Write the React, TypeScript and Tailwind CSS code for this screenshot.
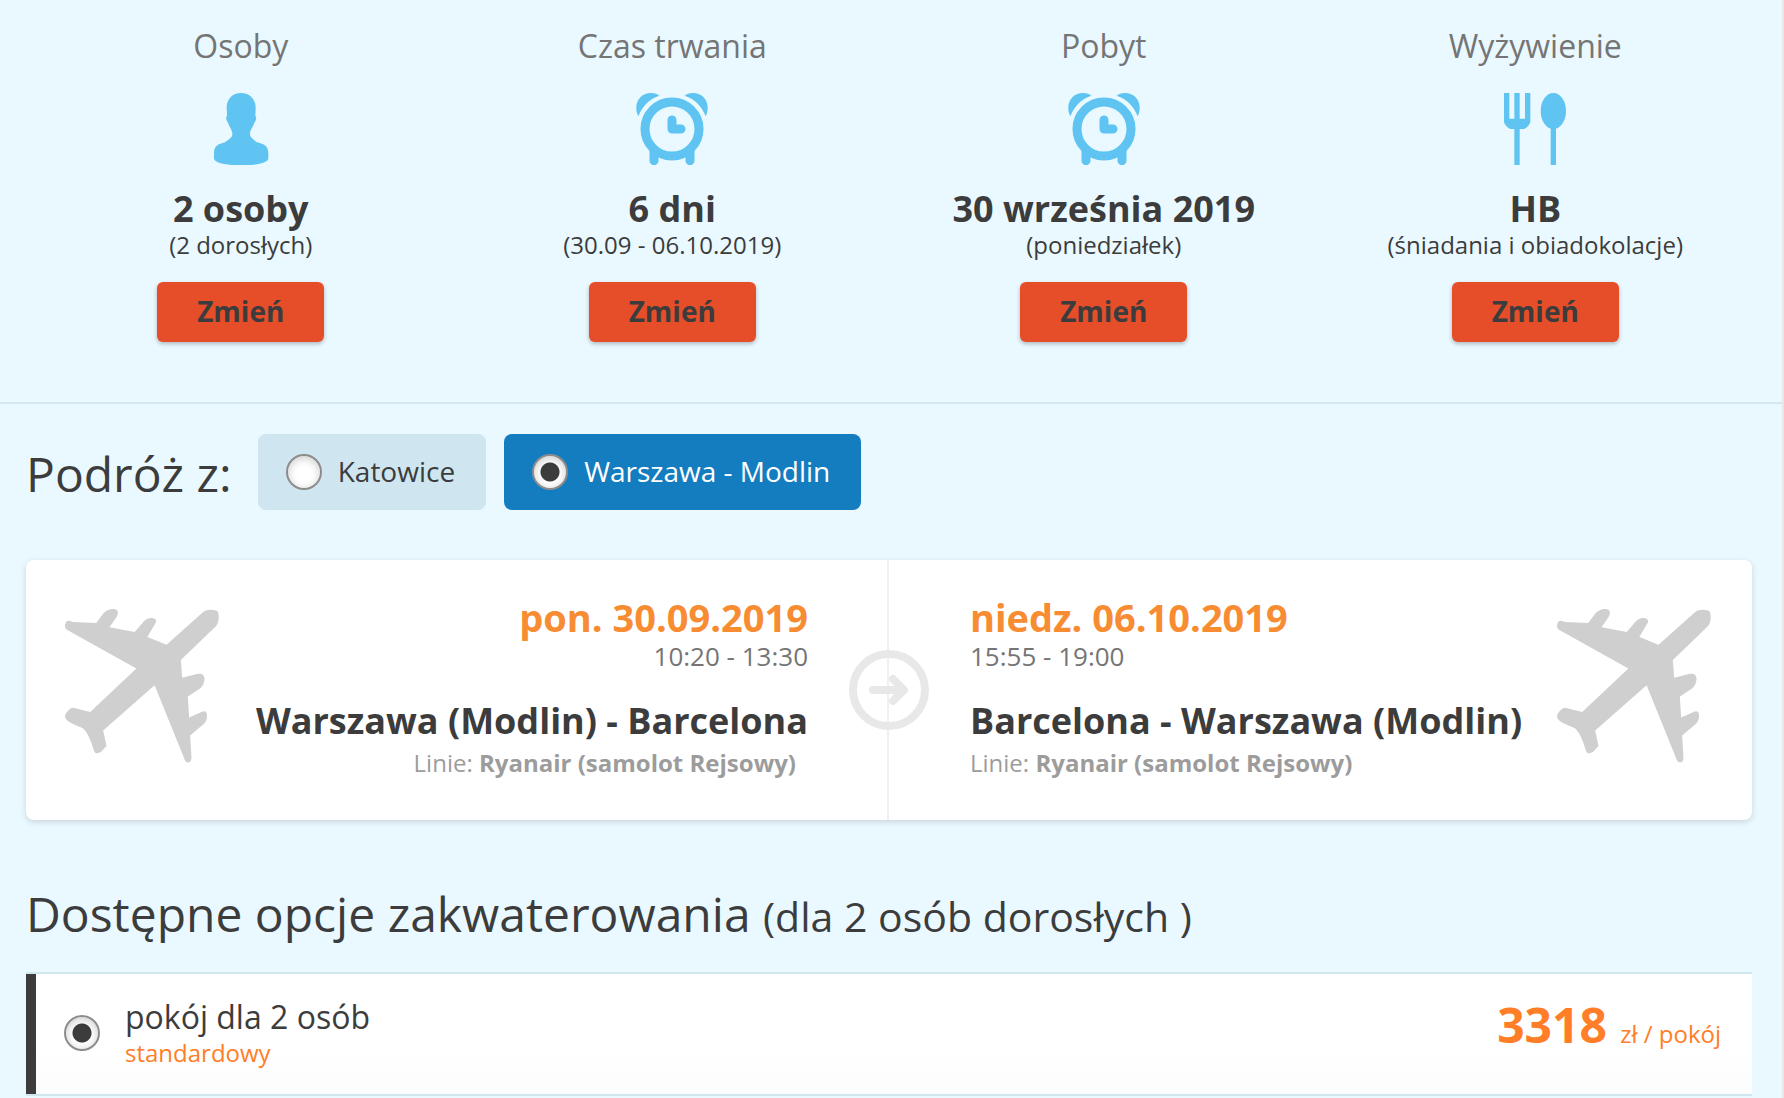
import React, { useState } from 'react'

function PersonIcon() {
  return (
    <svg viewBox="194 278 216 216" className="w-[72px] h-[72px]" fill="#5fc4f1" aria-hidden="true">
      <path d="M302 278C327 278 346 296 346 322L345 347C350 350 347 362 342 367C337 383 329 388 329 401C329 411 337 415 350 426C372 431 384 438 384 458V474C384 489 345 495 302 495C259 495 221 489 221 474V458C221 438 233 431 254 426C268 415 276 411 276 401C276 388 268 383 263 367C258 362 255 350 260 347L259 322C259 296 277 278 302 278Z" />
    </svg>
  )
}

function ClockIcon() {
  return (
    <svg viewBox="289 278 216 216" className="w-[72px] h-[72px]" fill="none" stroke="#5fc4f1" strokeWidth="27" aria-hidden="true">
      <circle cx="397" cy="386" r="81" />
      <path d="M397 359V386H424" strokeLinecap="round" strokeLinejoin="round" />
      <path d="M343 448V481M451 448V481" strokeLinecap="round" />
      <path d="M296 348C280 316 296 278 335 278C345 278 353 281 359 286C328 296 306 320 296 348Z" fill="#5fc4f1" stroke="none" />
      <path d="M498 348C514 316 498 278 459 278C449 278 441 281 435 286C466 296 488 320 498 348Z" fill="#5fc4f1" stroke="none" />
    </svg>
  )
}

function CutleryIcon() {
  return (
    <svg viewBox="357 278 216 216" className="w-[72px] h-[72px]" fill="#5fc4f1" aria-hidden="true">
      <path d="M372 278H388V355H403V278H419V355H435V278H451V366Q446 380 432 386H419V495H403V386H391Q377 380 372 366Z" />
      <ellipse cx="520" cy="332" rx="38" ry="54" />
      <path d="M512 380H528V495H512Z" />
    </svg>
  )
}

function PlaneIcon() {
  return (
    <svg viewBox="134 177 464 464" className="w-[154px] h-[154px] shrink-0" fill="#cfcfcf" aria-hidden="true">
      <path d="M134 228C134 216 142 210 152 214L158 216L228 219L250 190C258 179 285 171 292 183C295 188 292 198 288 203L268 232L344 246L370 216C380 204 396 200 406 208C410 212 409 216 406 221L382 261L440 285L546 190C556 180 572 177 592 182C600 190 599 218 588 230L483 331L487 384L532 373C548 369 556 378 554 392C552 402 549 411 540 417L504 441L508 504L545 487C557 482 563 487 562 503C560 515 556 520 550 525L511 558L515 625C515 643 499 643 495 632L404 407L249 543L259 590L245 605C236 614 224 614 221 603C214 580 204 550 188 536C172 528 140 520 134 503C134 492 144 482 151 477C154 475 158 474 162 475L210 487L349 356L141 240C137 238 134 234 134 228Z" />
    </svg>
  )
}

function ArrowIcon() {
  return (
    <svg viewBox="0 0 80 80" className="w-20 h-20" fill="none" stroke="#e8e8e8" strokeWidth="8" strokeLinecap="round" strokeLinejoin="round" aria-hidden="true">
      <circle cx="40" cy="40" r="36" />
      <path d="M24 40H54M44 29L55 40L44 51" />
    </svg>
  )
}

const summary = [
  { label: 'Osoby', icon: <PersonIcon />, value: '2 osoby', note: '(2 dorosłych)' },
  { label: 'Czas trwania', icon: <ClockIcon />, value: '6 dni', note: '(30.09 - 06.10.2019)' },
  { label: 'Pobyt', icon: <ClockIcon />, value: '30 września 2019', note: '(poniedziałek)' },
  { label: 'Wyżywienie', icon: <CutleryIcon />, value: 'HB', note: '(śniadania i obiadokolacje)' }
]

const airports = ['Katowice', 'Warszawa - Modlin']

const radioClass =
  'appearance-none w-9 h-9 shrink-0 rounded-full border-2 border-[#8c8c8c] bg-white shadow-[inset_0_2px_8px_rgba(0,0,0,0.2)] checked:bg-[radial-gradient(circle,#3c3c3c_9px,transparent_10px)]'

export default function App() {
  const [airport, setAirport] = useState('Warszawa - Modlin')

  return (
    <div className="min-h-screen bg-[#e9f9ff] border-r-2 border-[#e8e8e8] font-['Open_Sans',sans-serif] text-[#3c3c3c]">
      {/* Trip summary */}
      <section className="grid grid-cols-4 pl-[25px] pr-[31px] pt-[26px] pb-[60px] border-b-2 border-[#d3e8f0]">
        {summary.map((item) => (
          <div key={item.label} className="flex flex-col items-center text-center">
            <h2 className="text-[32px] leading-10 text-[#757575] mb-[27px]">{item.label}</h2>
            {item.icon}
            <strong className="text-[36px] leading-10 font-bold mt-6">{item.value}</strong>
            <span className="text-[24px] leading-8">{item.note}</span>
            <button
              type="button"
              className="mt-[21px] h-[60px] px-10 pb-[2px] rounded-md bg-[#e64e29] text-[28px] font-bold shadow-[0_2px_4px_rgba(0,0,0,0.25)]"
            >
              Zmień
            </button>
          </div>
        ))}
      </section>

      <main className="pl-[26px] pr-[30px]">
        {/* Departure airport */}
        <div role="radiogroup" aria-labelledby="airport-heading" className="flex items-start pt-[30px]">
          <h2 id="airport-heading" className="text-[48px] leading-[80px] mr-[26px]">Podróż z:</h2>
          <div className="flex gap-[18px]">
            {airports.map((name) => (
              <label
                key={name}
                className={`flex items-center gap-4 h-[76px] pl-7 pr-[31px] rounded-lg text-[28px] ${
                  airport === name ? 'bg-[#147dbf] text-white' : 'bg-[#cfe6f0]'
                }`}
              >
                <input
                  type="radio"
                  name="airport"
                  checked={airport === name}
                  onChange={() => setAirport(name)}
                  className={radioClass}
                />
                <span className="pb-[2px]">{name}</span>
              </label>
            ))}
          </div>
        </div>

        {/* Flights */}
        <section className="relative grid grid-cols-2 mt-[46px] bg-white rounded-lg shadow-[0_2px_6px_rgba(0,0,0,0.14)]">
          <div className="flex justify-between pt-[34px] pb-[39px] pl-[39px] pr-[79px] border-r-2 border-[#f0f0f0]">
            <div className="pt-[15px]">
              <PlaneIcon />
            </div>
            <div className="text-right whitespace-nowrap">
              <p className="text-[38px] leading-[46px] font-bold text-[#f78c32]">pon. 30.09.2019</p>
              <p className="text-[26px] leading-8 text-[#757575]">10:20 - 13:30</p>
              <h3 className="mt-[25px] text-[36px] leading-[48px] font-bold">Warszawa (Modlin) - Barcelona</h3>
              <p className="pr-3 text-[24px] leading-9 text-[#9c9c9c]">
                Linie: <b>Ryanair (samolot Rejsowy)</b>
              </p>
            </div>
          </div>
          <div className="flex justify-between pt-[34px] pb-[39px] pl-[81px] pr-[41px]">
            <div className="whitespace-nowrap">
              <p className="text-[38px] leading-[46px] font-bold text-[#f78c32]">niedz. 06.10.2019</p>
              <p className="text-[26px] leading-8 text-[#757575]">15:55 - 19:00</p>
              <h3 className="mt-[25px] text-[36px] leading-[48px] font-bold">Barcelona - Warszawa (Modlin)</h3>
              <p className="text-[24px] leading-9 text-[#9c9c9c]">
                Linie: <b>Ryanair (samolot Rejsowy)</b>
              </p>
            </div>
            <div className="pt-[15px]">
              <PlaneIcon />
            </div>
          </div>
          <div className="absolute inset-0 flex items-center justify-center pointer-events-none">
            <ArrowIcon />
          </div>
        </section>

        {/* Rooms */}
        <h2 className="mt-[62px] text-[48px] leading-[64px]">
          Dostępne opcje zakwaterowania <span className="text-[41px] leading-none">(dla 2 osób dorosłych )</span>
        </h2>
        <div className="mt-[26px] border-y-2 border-[#d0e7f0]">
          <label className="flex items-start pt-[23px] pb-[25px] pl-7 pr-[31px] border-l-10 border-l-[#3c3c3c] bg-linear-to-b from-white from-60% to-[#fcfcfc]">
            <input type="radio" name="room" defaultChecked className={`${radioClass} self-center`} />
            <span className="flex flex-col ml-[25px]">
              <span className="text-[32px] leading-10">pokój dla 2 osób</span>
              <span className="text-[24px] leading-8 text-[#ff7e27]">standardowy</span>
            </span>
            <span className="ml-auto text-[24px] leading-[56px] text-[#ff7e27]">
              <b className="text-[48px] mr-[7px]">3318</b> zł / pokój
            </span>
          </label>
        </div>
      </main>
    </div>
  )
}
